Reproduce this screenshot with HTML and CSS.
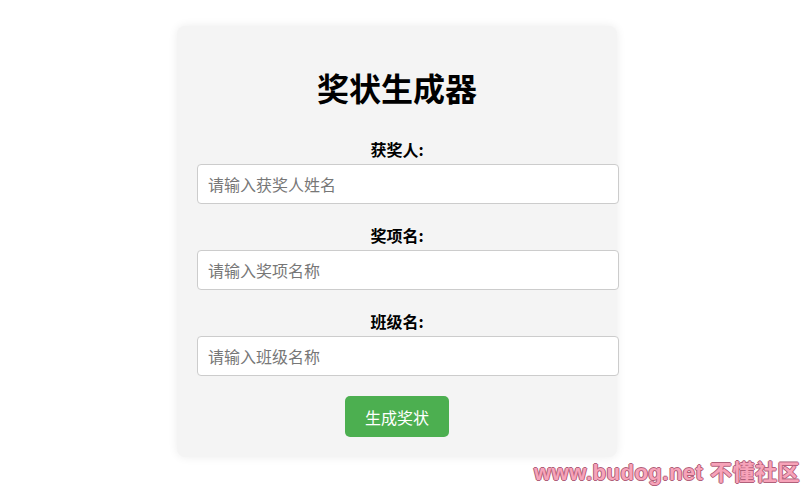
FILE: index.html
```html
<!DOCTYPE html>
<html lang="zh-CN">
<head>
    <meta charset="UTF-8">
    <meta name="viewport" content="width=device-width, initial-scale=1.0">
    <title>奖状生成器</title>
    <link rel="stylesheet" href="styles.css">
</head>
<body>
    <div class="container">
        <!-- Header -->
        <h1 class="title">奖状生成器</h1>

        <!-- Fields -->
        <div class="field">
            <label for="name">获奖人:</label>
            <input type="text" id="name" placeholder="请输入获奖人姓名">
        </div>
        <div class="field">
            <label for="award">奖项名:</label>
            <input type="text" id="award" placeholder="请输入奖项名称">
        </div>
        <div class="field">
            <label for="klass">班级名:</label>
            <input type="text" id="klass" placeholder="请输入班级名称">
        </div>

        <!-- Button -->
        <button class="btn">生成奖状</button>
    </div>

    <!-- Watermark -->
    <div class="watermark">www.budog.net 不懂社区</div>
</body>
</html>
```

FILE: styles.css
```css
/* Reset */
* {
    margin: 0;
    padding: 0;
}

body {
    font-family: "Noto Sans CJK SC", "Noto Sans", sans-serif;
    background: #fff;
    color: #000;
    display: flex;
    justify-content: center;
    align-items: flex-start;
    padding: 26px 14px 0 0;
    height: 494px;
    box-sizing: border-box;
    overflow: hidden;
}

/* Card */
.container {
    width: 400px;
    padding: 20px;
    background: #f4f4f4;
    border-radius: 8px;
    box-shadow: 0 0 10px rgba(0, 0, 0, 0.08);
    text-align: center;
}

.title {
    font-size: 32px;
    line-height: 40px;
    font-weight: 700;
    margin: 21px 0 32px;
}

/* Fields */
.field {
    margin-bottom: 21px;
}

.field label {
    display: block;
    font-size: 16px;
    line-height: 20px;
    font-weight: 700;
    margin-bottom: 5px;
}

.field input {
    display: block;
    width: 100%;
    height: 18px;
    padding: 10px;
    font-size: 16px;
    font-family: inherit;
    line-height: 18px;
    background: #fff;
    border: 1px solid #ccc;
    border-radius: 4px;
    outline: none;
}

.field input::placeholder {
    color: #777;
}

.field:last-of-type {
    margin-bottom: 20px;
}

/* Button */
.btn {
    width: 104px;
    height: 41px;
    font-size: 16px;
    font-family: inherit;
    color: #fff;
    background: #4caf50;
    border: none;
    border-radius: 5px;
    cursor: pointer;
}

/* Watermark */
.watermark {
    position: absolute;
    right: 8px;
    bottom: 8px;
    font-family: "Liberation Sans Narrow", "Liberation Sans", "Noto Sans CJK SC", sans-serif;
    font-size: 22px;
    font-weight: 700;
    color: #f7a3b9;
    letter-spacing: 0.5px;
    text-shadow: -1px 0 #b0607a, 1px 0 #b0607a, 0 -1px #b0607a, 0 1px #b0607a;
}
```
